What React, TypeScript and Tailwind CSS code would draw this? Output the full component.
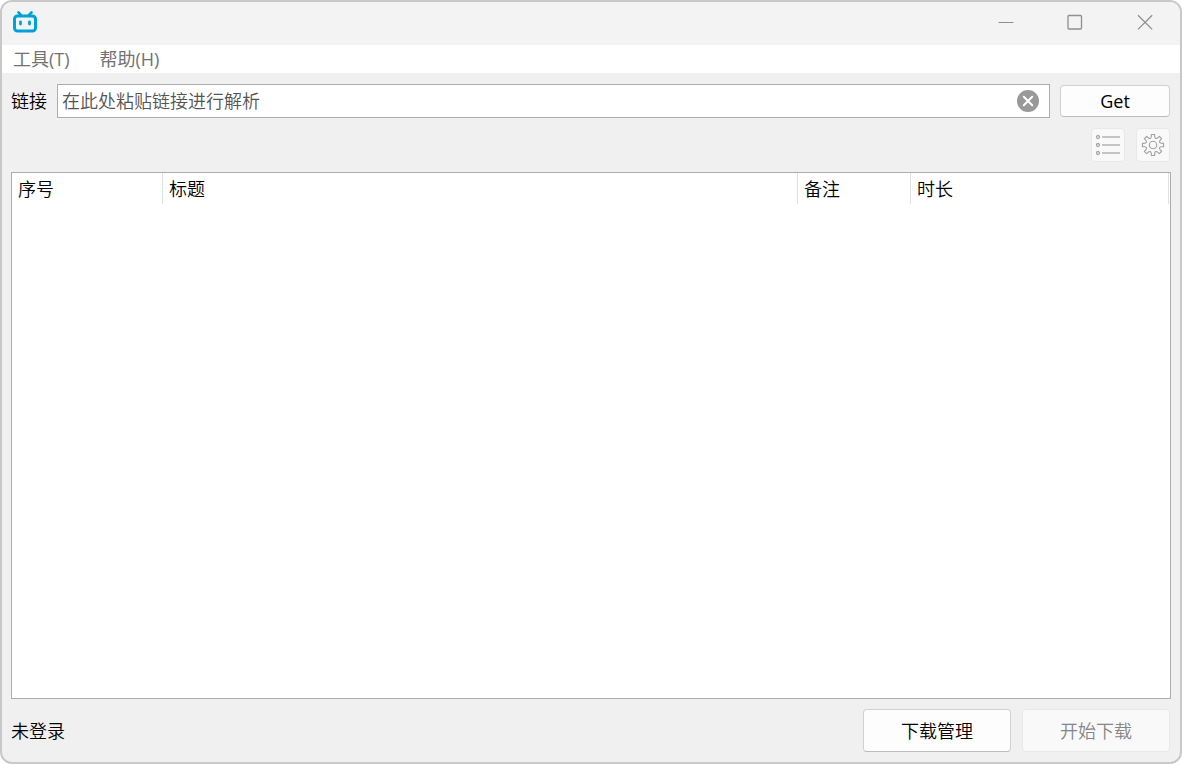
import { useState } from 'react';

const MENUS = ['工具(T)', '帮助(H)'];

const COLUMNS = [
  { title: '序号', width: 'w-[151px]' },
  { title: '标题', width: '' },
  { title: '备注', width: 'w-[113px]' },
  { title: '时长', width: 'w-[258px]' },
];

// outline of a cog with eight square teeth and rounded bites between them
const gearPath = () => {
  const point = (radius: number, degrees: number) => {
    const a = (degrees * Math.PI) / 180;
    return `${(12 + radius * Math.sin(a)).toFixed(2)} ${(12 - radius * Math.cos(a)).toFixed(2)}`;
  };
  let d = '';
  for (let i = 0; i < 8; i++) {
    const a = i * 45;
    d += `${i === 0 ? 'M' : 'L'}${point(8.4, a - 12)}L${point(10.7, a - 9)}L${point(10.7, a + 9)}L${point(8.4, a + 12)}`;
    d += `Q${point(6, a + 22.5)} ${point(8.4, a + 33)}`;
  }
  return d + 'Z';
};

const AppLogo = () => (
  <svg viewBox="0 0 26 22" className="h-[22px] w-[26px]" fill="none" stroke="#00a1d6" strokeWidth="3" strokeLinecap="round" aria-hidden="true">
    <path d="M6.5 1.5L9.2 4.2M19.5 1.5L16.8 4.2" strokeWidth="2.6" />
    <rect x="2.5" y="5" width="21" height="15" rx="3" />
    <path d="M8.5 11v2M17.5 11v2" strokeWidth="2.8" />
  </svg>
);

const ListIcon = () => (
  <svg viewBox="0 0 26 22" className="h-[22px] w-[26px]" fill="none" stroke="#a8a8a8" aria-hidden="true">
    <circle cx="3" cy="3" r="1.5" strokeWidth="1.3" />
    <circle cx="3" cy="11" r="1.5" strokeWidth="1.3" />
    <circle cx="3" cy="19" r="1.5" strokeWidth="1.3" />
    <path d="M7 3h18M7 11h18M7 19h18" stroke="#c4c4c4" strokeWidth="2" />
  </svg>
);

const GearIcon = () => (
  <svg viewBox="0 0 24 24" className="h-6 w-6" fill="none" stroke="#a0a0a0" strokeWidth="1.1" strokeLinejoin="round" aria-hidden="true">
    <path d={gearPath()} />
    <circle cx="12" cy="12" r="3.7" />
  </svg>
);

function TitleBar() {
  return (
    <header className="flex h-[43px] shrink-0 items-center justify-between bg-[#f3f3f3] pb-[3px] pl-[10px] text-[#8f8f8f]">
      <AppLogo />
      <div className="flex h-full">
        <button type="button" aria-label="最小化" className="flex w-[70px] items-center justify-center">
          <svg viewBox="0 0 16 16" className="h-4 w-4" stroke="currentColor" fill="none">
            <path d="M.5 8.5h15" />
          </svg>
        </button>
        <button type="button" aria-label="最大化" className="flex w-[68px] items-center justify-center">
          <svg viewBox="0 0 16 16" className="h-4 w-4" stroke="currentColor" strokeWidth="1.3" fill="none">
            <rect x="1" y="1.5" width="13.5" height="13.5" rx="1" />
          </svg>
        </button>
        <button type="button" aria-label="关闭" className="flex w-[71px] items-center justify-center">
          <svg viewBox="0 0 16 16" className="h-4 w-4" stroke="currentColor" strokeWidth="1.3" fill="none">
            <path d="M1 1.2l14.2 14.2M15.2 1.2L1 15.4" />
          </svg>
        </button>
      </div>
    </header>
  );
}

export default function App() {
  const [link, setLink] = useState('');

  return (
    <div className="bg-white">
      <div className="flex h-screen flex-col overflow-hidden rounded-xl border-2 border-[#c8c8c8] bg-[#f0f0f0] font-['Open_Sans','Noto_Sans_CJK_SC',sans-serif] text-[18px] leading-6 font-[350] text-black">
        <TitleBar />

        <nav className="flex h-7 shrink-0 items-center gap-[30px] bg-white px-[11px] font-normal text-[#727272]">
          {MENUS.map(menu => (
            <button key={menu} type="button">{menu}</button>
          ))}
        </nav>

        <main className="flex min-h-0 flex-1 flex-col px-[9px] pt-[11px] pb-[10px]">
          <div className="flex items-center gap-[10px]">
            <label htmlFor="link" className="shrink-0">链接</label>
            <div className="flex h-[34px] min-w-0 flex-1 items-center border border-[#abadb3] bg-white pr-[10px] pl-1">
              <input
                id="link"
                type="text"
                value={link}
                onChange={e => setLink(e.target.value)}
                placeholder="在此处粘贴链接进行解析"
                className="min-w-0 flex-1 outline-none placeholder:text-[#555]"
              />
              <button type="button" aria-label="清除" onClick={() => setLink('')}>
                <svg viewBox="0 0 22 22" className="h-[22px] w-[22px]" aria-hidden="true">
                  <circle cx="11" cy="11" r="11" fill="#999" />
                  <path d="M6.8 6.8l8.4 8.4M15.2 6.8l-8.4 8.4" stroke="#fff" strokeWidth="2" strokeLinecap="round" />
                </svg>
              </button>
            </div>
            <button type="button" className="mr-px h-8 w-[110px] shrink-0 rounded border border-[#d0d0d0] border-b-[#bcbcbc] bg-[#fdfdfd] font-normal">
              Get
            </button>
          </div>

          <div className="mt-[10px] mb-[10px] flex justify-end gap-[11px] pr-px">
            <button type="button" disabled aria-label="剧集列表" className="flex h-[34px] w-[34px] items-center justify-center rounded border border-[#e8e8e8] bg-[#f9f9f9]">
              <ListIcon />
            </button>
            <button type="button" disabled aria-label="设置" className="flex h-[34px] w-[34px] items-center justify-center rounded border border-[#e8e8e8] bg-[#f9f9f9]">
              <GearIcon />
            </button>
          </div>

          <div className="min-h-0 flex-1 overflow-auto border border-[#abadb3] bg-white pr-px">
            <table className="w-full table-fixed border-separate border-spacing-0">
              <thead>
                <tr>
                  {COLUMNS.map(col => (
                    <th key={col.title} scope="col" className={`h-[31px] border-r border-[#e0e0e0] pt-px pl-[6px] text-left font-[350] ${col.width}`}>
                      {col.title}
                    </th>
                  ))}
                </tr>
              </thead>
              <tbody />
            </table>
          </div>

          <footer className="mt-[10px] flex items-center gap-[11px] pr-px">
            <span className="flex-1">未登录</span>
            <button type="button" className="h-[43px] w-[148px] rounded border border-[#d0d0d0] border-b-[#bcbcbc] bg-[#fdfdfd]">
              下载管理
            </button>
            <button type="button" disabled className="h-[43px] w-[148px] rounded border border-[#e8e8e8] bg-[#f9f9f9] text-[#868686]">
              开始下载
            </button>
          </footer>
        </main>
      </div>
    </div>
  );
}
